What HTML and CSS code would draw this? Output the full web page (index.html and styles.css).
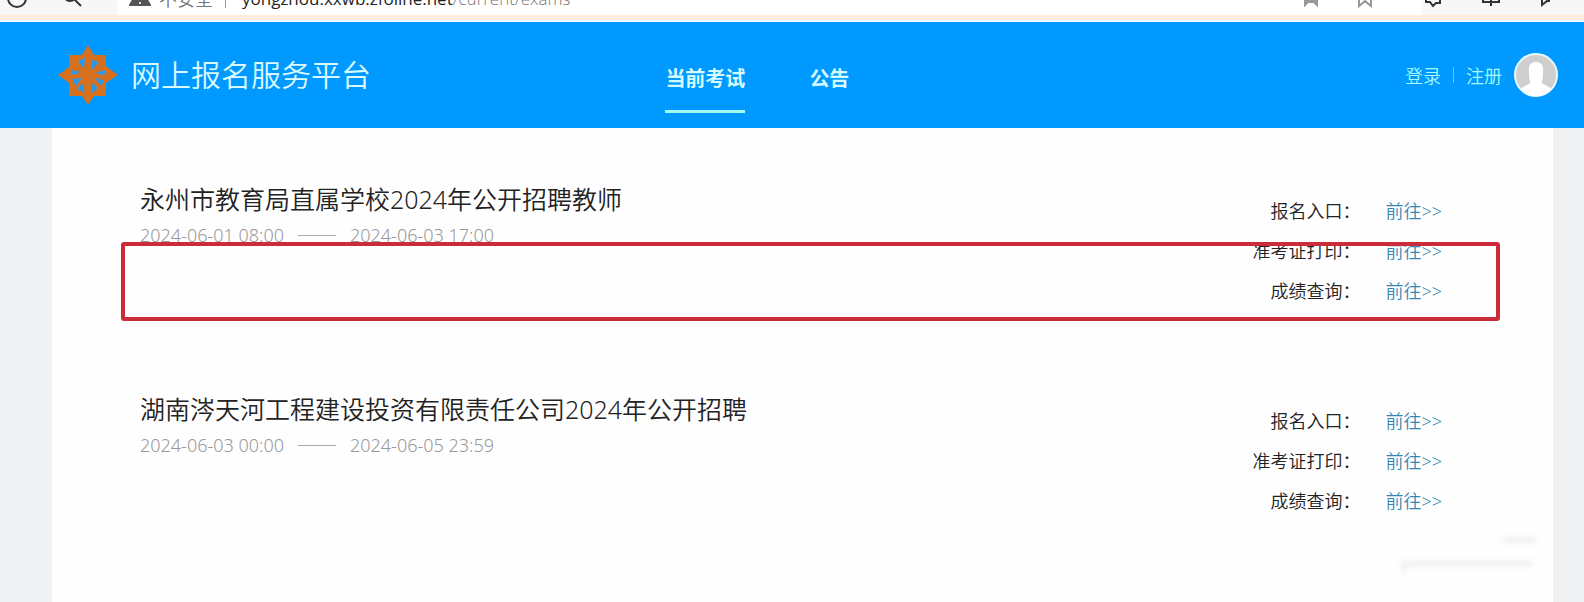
FILE: index.html
```html
<!DOCTYPE html>
<html lang="zh-CN">
<head>
    <meta charset="UTF-8">
    <meta name="viewport" content="width=device-width, initial-scale=1.0">
    <title>网上报名服务平台</title>
    <link rel="stylesheet" href="styles.css">
</head>
<body>
    <div class="browser-bar">
        <div class="browser-row">
            <svg class="icon icon-reload" viewBox="0 0 22 22"><circle cx="11" cy="11" r="9"/></svg>
            <svg class="icon icon-search" viewBox="0 0 22 22"><circle cx="8" cy="8" r="6"/><path d="M12 12l7 7"/></svg>
            <div class="address">
                <svg class="icon icon-warn" viewBox="0 0 22 22"><path d="M11 1L21 18H1z"/><path class="warn-mark" d="M11 6v7M11 15v2"/></svg>
                <span class="insecure">不安全</span>
                <span class="bar-line"></span>
                <span class="url"><b>yongzhou.xxwb.zfoline.net</b>/current/exams</span>
                <div class="address-tools">
                    <svg class="icon icon-gray icon-fill" viewBox="0 0 22 22"><path d="M5 2h12v16l-3-3H8l-3 3z"/></svg>
                    <svg class="icon icon-gray" viewBox="0 0 22 22"><path d="M5 2h12v17l-6-5-6 5z"/></svg>
                </div>
            </div>
            <div class="browser-tools">
                <svg class="icon" viewBox="0 0 22 22"><path d="M4 3v12h4l3 4 3-3h4V3"/></svg>
                <svg class="icon" viewBox="0 0 22 22"><path d="M3 2v13h16V2M11 2v17"/></svg>
                <svg class="icon" viewBox="0 0 22 22"><path d="M4 2v16l5-4h3M11 11h8"/></svg>
            </div>
        </div>
    </div>

    <header class="header">
        <div class="brand">
            <svg class="logo" viewBox="0 0 60 60">
                <path class="logo-shape" d="M30 0l6 10h12v11l12 9-12 8v13H36l-6 9-6-9H11V38L0 30l11-8V10h13z"/>
                <path class="logo-hole" d="M27 13l-1 11-6-8zM34 15l7 2-7 8zM13 25l10 2-9 3zM37 28l10-3v5zM14 34l10-1-6 8zM37 33l9 2-3 6zM24 38l3 9-8-3zM33 37l7 6-6 5z"/>
            </svg>
            <span class="brand-name">网上报名服务平台</span>
        </div>
        <nav class="nav">
            <a class="nav-link active" href="#">当前考试</a>
            <a class="nav-link" href="#">公告</a>
        </nav>
        <div class="user">
            <a href="#">登录</a>
            <span class="user-line"></span>
            <a href="#">注册</a>
            <svg class="avatar" viewBox="0 0 44 44">
                <circle cx="22" cy="22" r="21"/>
                <path d="M15 16c0-5 3-7 7-7s7 2 7 7v8c0 3-2 4-1 6 2 2 7 3 9 6-4 5-9 7-15 7s-11-2-15-7c2-3 7-4 9-6 1-2-1-3-1-6z"/>
            </svg>
        </div>
    </header>

    <main class="content">
        <section class="exam">
            <div class="exam-info">
                <h2>永州市教育局直属学校2024年公开招聘教师</h2>
                <p class="exam-time"><span>2024-06-01 08:00</span><i></i><span>2024-06-03 17:00</span></p>
            </div>
            <ul class="exam-links">
                <li><span>报名入口：</span><a href="#">前往&gt;&gt;</a></li>
                <li><span>准考证打印：</span><a href="#">前往&gt;&gt;</a></li>
                <li><span>成绩查询：</span><a href="#">前往&gt;&gt;</a></li>
            </ul>
            <div class="mark-box"></div>
        </section>
        <section class="exam">
            <div class="exam-info">
                <h2>湖南涔天河工程建设投资有限责任公司2024年公开招聘</h2>
                <p class="exam-time"><span>2024-06-03 00:00</span><i></i><span>2024-06-05 23:59</span></p>
            </div>
            <ul class="exam-links">
                <li><span>报名入口：</span><a href="#">前往&gt;&gt;</a></li>
                <li><span>准考证打印：</span><a href="#">前往&gt;&gt;</a></li>
                <li><span>成绩查询：</span><a href="#">前往&gt;&gt;</a></li>
            </ul>
        </section>
        <svg class="watermark" viewBox="0 0 140 44"><path d="M104 0h32v8h-32zM2 24h132v7H10l-8 8z"/></svg>
    </main>
</body>
</html>
```

FILE: styles.css
```css
* {
    box-sizing: border-box;
}

body {
    margin: 0;
    min-height: 100vh;
    display: flex;
    flex-direction: column;
    background-color: #f0f1f3;
    color: #222;
    font-family: 'Noto Sans', 'Noto Sans CJK SC', sans-serif;
    font-size: 18px;
    font-weight: 350;
    overflow: hidden;
}

a {
    text-decoration: none;
}

/* 浏览器地址栏 */
.browser-bar {
    height: 20px;
    display: flex;
    align-items: flex-end;
    overflow: hidden;
    background-color: #f7f7f7;
    border-bottom: 5px solid #feeee0;
}

.browser-row {
    flex: 1;
    height: 34px;
    padding: 0 24px 0 6px;
    display: flex;
    align-items: center;
}

.icon {
    width: 22px;
    height: 22px;
    fill: none;
    stroke: #333;
    stroke-width: 2;
}

.icon-reload {
    margin-right: 34px;
}

.icon-search {
    margin-right: 34px;
}

.address {
    flex: 1;
    height: 34px;
    display: flex;
    align-items: center;
    padding-left: 11px;
    background-color: #fff;
}

.address .icon-warn {
    fill: #555;
    stroke: #555;
}

.icon-warn .warn-mark {
    stroke: #ddd;
}

.insecure {
    margin-left: 8px;
    color: #777;
}

.bar-line {
    width: 1px;
    height: 20px;
    margin: 0 16px 0 12px;
    background-color: #999;
}

.url {
    font-family: 'Open Sans', sans-serif;
    font-size: 17px;
    color: #777;
}

.url b {
    font-weight: 400;
    color: #222;
}

.address-tools {
    margin-left: auto;
    padding-right: 46px;
    display: flex;
    gap: 32px;
}

.browser-tools {
    display: flex;
    gap: 36px;
}

.icon-gray {
    stroke: #999;
}

.icon-fill {
    fill: #999;
}

/* 顶部导航 */
.header {
    height: 108px;
    padding: 0 26px 0 58px;
    display: grid;
    grid-template-columns: 6fr auto 7fr;
    align-items: center;
    background-color: #0099ff;
    border-top: 2px solid #f4fdff;
}

.brand {
    display: flex;
    align-items: center;
    gap: 13px;
}

.logo {
    width: 60px;
    height: 60px;
}

.logo-shape {
    fill: #d5701f;
}

.logo-hole {
    fill: #2a98ea;
}

.brand-name {
    font-size: 30px;
    line-height: 40px;
    color: #d9faff;
}

.nav {
    height: 76px;
    display: flex;
    align-items: flex-end;
    gap: 64px;
}

.nav-link {
    height: 54px;
    border-bottom: 3px solid transparent;
    font-size: 20px;
    line-height: 40px;
    font-weight: 700;
    color: #d4fbff;
}

.nav-link.active {
    border-color: #a5fff0;
}

.user {
    display: flex;
    align-items: center;
    justify-content: flex-end;
    gap: 12px;
}

.user a {
    color: #a8fbf8;
}

.user-line {
    width: 1px;
    height: 16px;
    background-color: #5cc8f5;
}

.avatar {
    width: 44px;
    height: 44px;
    fill: #fff;
}

.avatar circle {
    fill: #cfcfcf;
    stroke: #e9fbff;
    stroke-width: 2;
}

/* 考试列表 */
.content {
    position: relative;
    flex: 1;
    margin: 0 31px 0 52px;
    padding: 51px 111px 0 88px;
    background-color: #fffeff;
}

.exam {
    position: relative;
    height: 210px;
    display: flex;
    justify-content: space-between;
}

.exam h2 {
    margin: 0;
    font-size: 25px;
    line-height: 40px;
    font-weight: 350;
}

.exam-time {
    margin: 0;
    display: flex;
    align-items: center;
    line-height: 32px;
    color: #999;
}

.exam-time i {
    width: 38px;
    height: 1px;
    margin: 0 14px;
    background-color: #aaa;
}

.exam-links {
    margin: 0;
    padding: 12px 0 0;
    list-style: none;
}

.exam-links li {
    display: flex;
    justify-content: flex-end;
    gap: 25px;
    line-height: 40px;
}

.exam-links a {
    color: #3487b3;
}

/* 红框标注 */
.mark-box {
    position: absolute;
    top: 63px;
    left: -19px;
    right: -58px;
    height: 79px;
    border: 4px solid #cb2c3a;
    border-radius: 3px;
}

.watermark {
    position: absolute;
    right: 14px;
    bottom: 22px;
    width: 140px;
    height: 44px;
    fill: #f4f2f4;
    filter: blur(2px);
}
```
